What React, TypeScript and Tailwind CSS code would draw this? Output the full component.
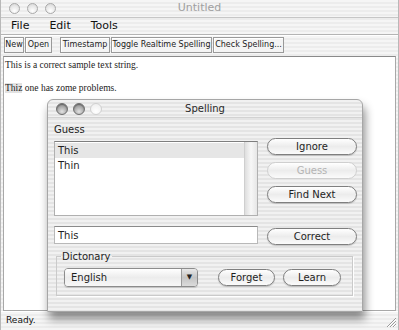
import React from "react";

const stripes =
  "bg-[repeating-linear-gradient(180deg,#f5f5f5_0px,#f5f5f5_2px,#ececec_2px,#ececec_4px)]";
const dlgStripes =
  "bg-[repeating-linear-gradient(180deg,#f1f1f1_0px,#f1f1f1_2px,#e4e4e4_2px,#e4e4e4_4px)]";

const Light = ({ kind }: { kind: "idle" | "dark" | "faded" }) => {
  if (kind === "dark")
    return (
      <div className="w-[12px] h-[12px] rounded-full border border-[#6f6f6f] bg-[radial-gradient(circle_at_50%_75%,#e2e2e2_0%,#a9a9a9_55%,#7d7d7d_100%)] shadow-[inset_0_1px_1px_rgba(0,0,0,0.3)]" />
    );
  if (kind === "faded")
    return <div className="w-[12px] h-[12px] rounded-full border border-[#d0d0d0] bg-[radial-gradient(circle_at_50%_75%,#ffffff_0%,#ececec_100%)]" />;
  return (
    <div className="w-[11px] h-[11px] rounded-full border border-[#a9a9a9] bg-[radial-gradient(circle_at_50%_75%,#ffffff_0%,#e6e6e6_60%,#d2d2d2_100%)]" />
  );
};

const ToolBtn = ({ label, w }: { label: string; w: string }) => (
  <div
    className={`${w} h-[16px] flex items-center justify-center border border-[#9a9a9a] bg-[#f4f4f4] shadow-[inset_1px_1px_0_#ffffff] text-[8px] text-[#222] whitespace-nowrap`}
  >
    {label}
  </div>
);

const AquaBtn = ({ label, w, disabled }: { label: string; w: string; disabled?: boolean }) => (
  <div
    className={`${w} h-[17px] rounded-full flex items-center justify-center text-[10px] border bg-linear-to-b from-white via-[#ececec] to-[#fbfbfb] ${
      disabled ? "border-[#cfcfcf] text-[#b4b4b4]" : "border-[#7f7f7f] text-[#1e1e1e] shadow-[0_1px_1px_rgba(0,0,0,0.18)]"
    }`}
  >
    {label}
  </div>
);

export default function App() {
  return (
    <div
      className={`relative w-[399px] h-[330px] overflow-hidden ${stripes} font-['DejaVu_Sans',sans-serif] border-l border-r border-[#b8b8b8]`}
    >
      {/* title bar */}
      <div className="grid grid-cols-[1fr_auto_1fr] items-center h-[18px] border-b border-[#c6c6c6]">
        <div className="flex items-center gap-[7px] pl-[8px]">
          <Light kind="idle" />
          <Light kind="idle" />
          <Light kind="idle" />
        </div>
        <div className="text-[11px] text-[#a0a0a0]">Untitled</div>
        <div />
      </div>

      {/* menu bar */}
      <div className="flex items-center h-[16px] pl-[10px] gap-[20px] text-[11px] text-[#111]">
        <span>File</span>
        <span>Edit</span>
        <span>Tools</span>
      </div>
      <div className="h-[2px] border-t border-[#b4b4b4] border-b border-b-white" />

      {/* toolbar */}
      <div className="flex h-[20px] pt-[1px] pl-[3px]">
        <ToolBtn label="New" w="w-[20px]" />
        <div className="ml-[1px]">
          <ToolBtn label="Open" w="w-[27px]" />
        </div>
        <div className="ml-[8px] flex gap-[1px]">
          <ToolBtn label="Timestamp" w="w-[50px]" />
          <ToolBtn label="Toggle Realtime Spelling" w="w-[101px]" />
          <ToolBtn label="Check Spelling..." w="w-[71px]" />
        </div>
      </div>

      {/* text area */}
      <div className="mx-[2px] h-[255px] bg-white border border-[#a8a8a8] border-t-[#8a8a8a] pt-[3px] pl-[1px] font-['Liberation_Serif',serif] text-[9.5px] leading-[11.5px] text-[#222]">
        <div>This is a correct sample text string.</div>
        <div>&nbsp;</div>
        <div>
          <span className="bg-[#e2e2e2]">Thiz</span> one has zome problems.
        </div>
      </div>

      {/* status bar */}
      <div className="relative h-[18px] flex items-center pl-[5px] text-[9px] text-[#111] border-t border-white">
        Ready.
        <svg className="absolute right-[1px] bottom-[1px]" width="13" height="13" viewBox="0 0 13 13">
          <path d="M12 3 L3 12 M12 6 L6 12 M12 9 L9 12" stroke="#9a9a9a" strokeWidth="1" />
          <path d="M12 4 L4 12 M12 7 L7 12 M12 10 L10 12" stroke="#ffffff" strokeWidth="1" />
        </svg>
      </div>

      {/* Spelling dialog */}
      <div
        className={`absolute left-[46px] top-[99px] w-[316px] h-[213px] rounded-t-[6px] border border-[#a6a6a6] ${dlgStripes} shadow-[2px_7px_10px_rgba(0,0,0,0.45)] text-[#1e1e1e]`}
      >
        <div className="grid grid-cols-[1fr_auto_1fr] items-center h-[18px] border-b border-[#d2d2d2]">
          <div className="flex items-center gap-[5px] pl-[8px]">
            <Light kind="dark" />
            <Light kind="dark" />
            <Light kind="faded" />
          </div>
          <div className="text-[10px] text-[#2a2a2a]">Spelling</div>
          <div />
        </div>

        <div className="pl-[6px] pt-[3px]">
          <div className="flex">
            <div className="w-[204px]">
              <div className="h-[17px] leading-[17px] text-[10px]">Guess</div>
              <div className="mt-[3px] h-[75px] flex bg-white border border-[#b0b0b0] border-t-[#7e7e7e]">
                <div className="flex-1 pt-[1px] text-[10px]">
                  <div className="h-[15px] leading-[15px] pl-[3px] bg-[#e6e6e6]">This</div>
                  <div className="h-[15px] leading-[15px] pl-[3px]">Thin</div>
                </div>
                <div className="w-[13px] border-l border-[#cfcfcf] bg-linear-to-r from-[#dedede] via-[#f7f7f7] to-[#e6e6e6]" />
              </div>
            </div>
            <div className="ml-[9px] w-[90px] flex flex-col gap-[7px] pt-[17px]">
              <AquaBtn label="Ignore" w="w-[90px]" />
              <AquaBtn label="Guess" w="w-[90px]" disabled />
              <AquaBtn label="Find Next" w="w-[90px]" />
            </div>
          </div>

          <div className="flex mt-[10px] items-start">
            <div className="w-[204px] h-[18px] flex items-center pl-[3px] bg-white border border-[#b8b8b8] border-t-[#8a8a8a] text-[10px]">
              This
            </div>
            <div className="ml-[9px] mt-[2px]">
              <AquaBtn label="Correct" w="w-[90px]" />
            </div>
          </div>

          <fieldset className="mt-[5px] ml-[2px] w-[297px] border border-[#cacaca] shadow-[1px_1px_0_#ffffff] pb-[8px]">
            <legend className="ml-[4px] px-[1px] text-[10px] leading-[13px]">Dictonary</legend>
            <div className="flex items-center mt-[5px] pl-[7px]">
              <div className="w-[134px] h-[19px] flex rounded-[4px] border border-[#8c8c8c] overflow-hidden shadow-[0_1px_1px_rgba(0,0,0,0.15)]">
                <div className="flex-1 flex items-center pl-[6px] text-[10px] bg-linear-to-b from-white via-[#ececec] to-[#f8f8f8]">
                  English
                </div>
                <div className="w-[16px] flex items-center justify-center border-l border-[#9a9a9a] bg-linear-to-b from-[#e8e8e8] via-[#c4c4c4] to-[#dcdcdc] text-[7px] text-[#222]">
                  ▼
                </div>
              </div>
              <div className="ml-[20px]">
                <AquaBtn label="Forget" w="w-[57px]" />
              </div>
              <div className="ml-[8px]">
                <AquaBtn label="Learn" w="w-[58px]" />
              </div>
            </div>
          </fieldset>
        </div>
      </div>
    </div>
  );
}
